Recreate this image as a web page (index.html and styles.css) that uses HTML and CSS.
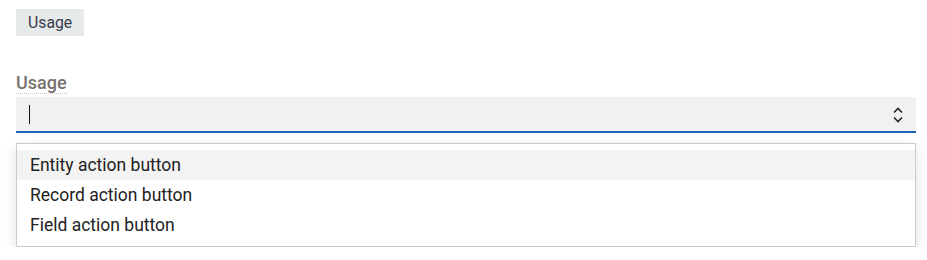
FILE: index.html
```html
<!DOCTYPE html>
<html lang="en">
<head>
    <meta charset="UTF-8">
    <meta name="viewport" content="width=device-width, initial-scale=1.0">
    <title>Usage</title>
    <link rel="stylesheet" href="styles.css">
</head>
<body>
    <div class="page">
        <div class="tag">Usage</div>

        <div class="field">
            <label class="field-label">Usage</label>
            <div class="select-box">
                <span class="caret"></span>
                <svg class="chevrons" width="12" height="18" viewBox="0 0 12 18">
                    <path d="M2 6.5 L6 2.5 L10 6.5" fill="none" stroke="#222" stroke-width="1.6"/>
                    <path d="M2 11.5 L6 15.5 L10 11.5" fill="none" stroke="#222" stroke-width="1.6"/>
                </svg>
            </div>
            <ul class="options">
                <li class="active">Entity action button</li>
                <li>Record action button</li>
                <li>Field action button</li>
            </ul>
        </div>
    </div>
</body>
</html>
```

FILE: styles.css
```css
body {
    margin: 0;
    font-family: Roboto, "Liberation Sans", sans-serif;
    background: #fff;
}
.page {
    width: 900px;
    padding: 9px 16px 0;
}
.tag {
    width: fit-content;
    height: 27px;
    line-height: 27px;
    padding: 0 12px;
    background: #e6eaeb;
    color: #3a3a4c;
    font-size: 15.8px;
}
.field {
    margin-top: 36px;
}
.field-label {
    display: inline-block;
    font-size: 18px;
    font-weight: 500;
    color: #77726d;
    line-height: 21px;
    border-bottom: 1px dotted #c4c4c4;
    margin-bottom: 3px;
    vertical-align: top;
}
.select-box {
    height: 34px;
    background: #f1f1f1;
    border-bottom: 2px solid #1a62b8;
    display: flex;
    align-items: center;
    justify-content: space-between;
    padding: 0 12px 0 13px;
}
.caret {
    width: 1px;
    height: 19px;
    background: #111;
}
.chevrons {
    margin-top: 2px;
}
.options {
    list-style: none;
    margin: 10px 0 0;
    padding: 6px 0;
    border: 1px solid #cacaca;
    box-shadow: 0 4px 12px rgba(0, 0, 0, 0.12);
    font-size: 17.5px;
    color: #222;
}
.options li {
    height: 30px;
    line-height: 30px;
    padding-left: 13px;
}
.options li.active {
    background: #f3f3f3;
}
```
